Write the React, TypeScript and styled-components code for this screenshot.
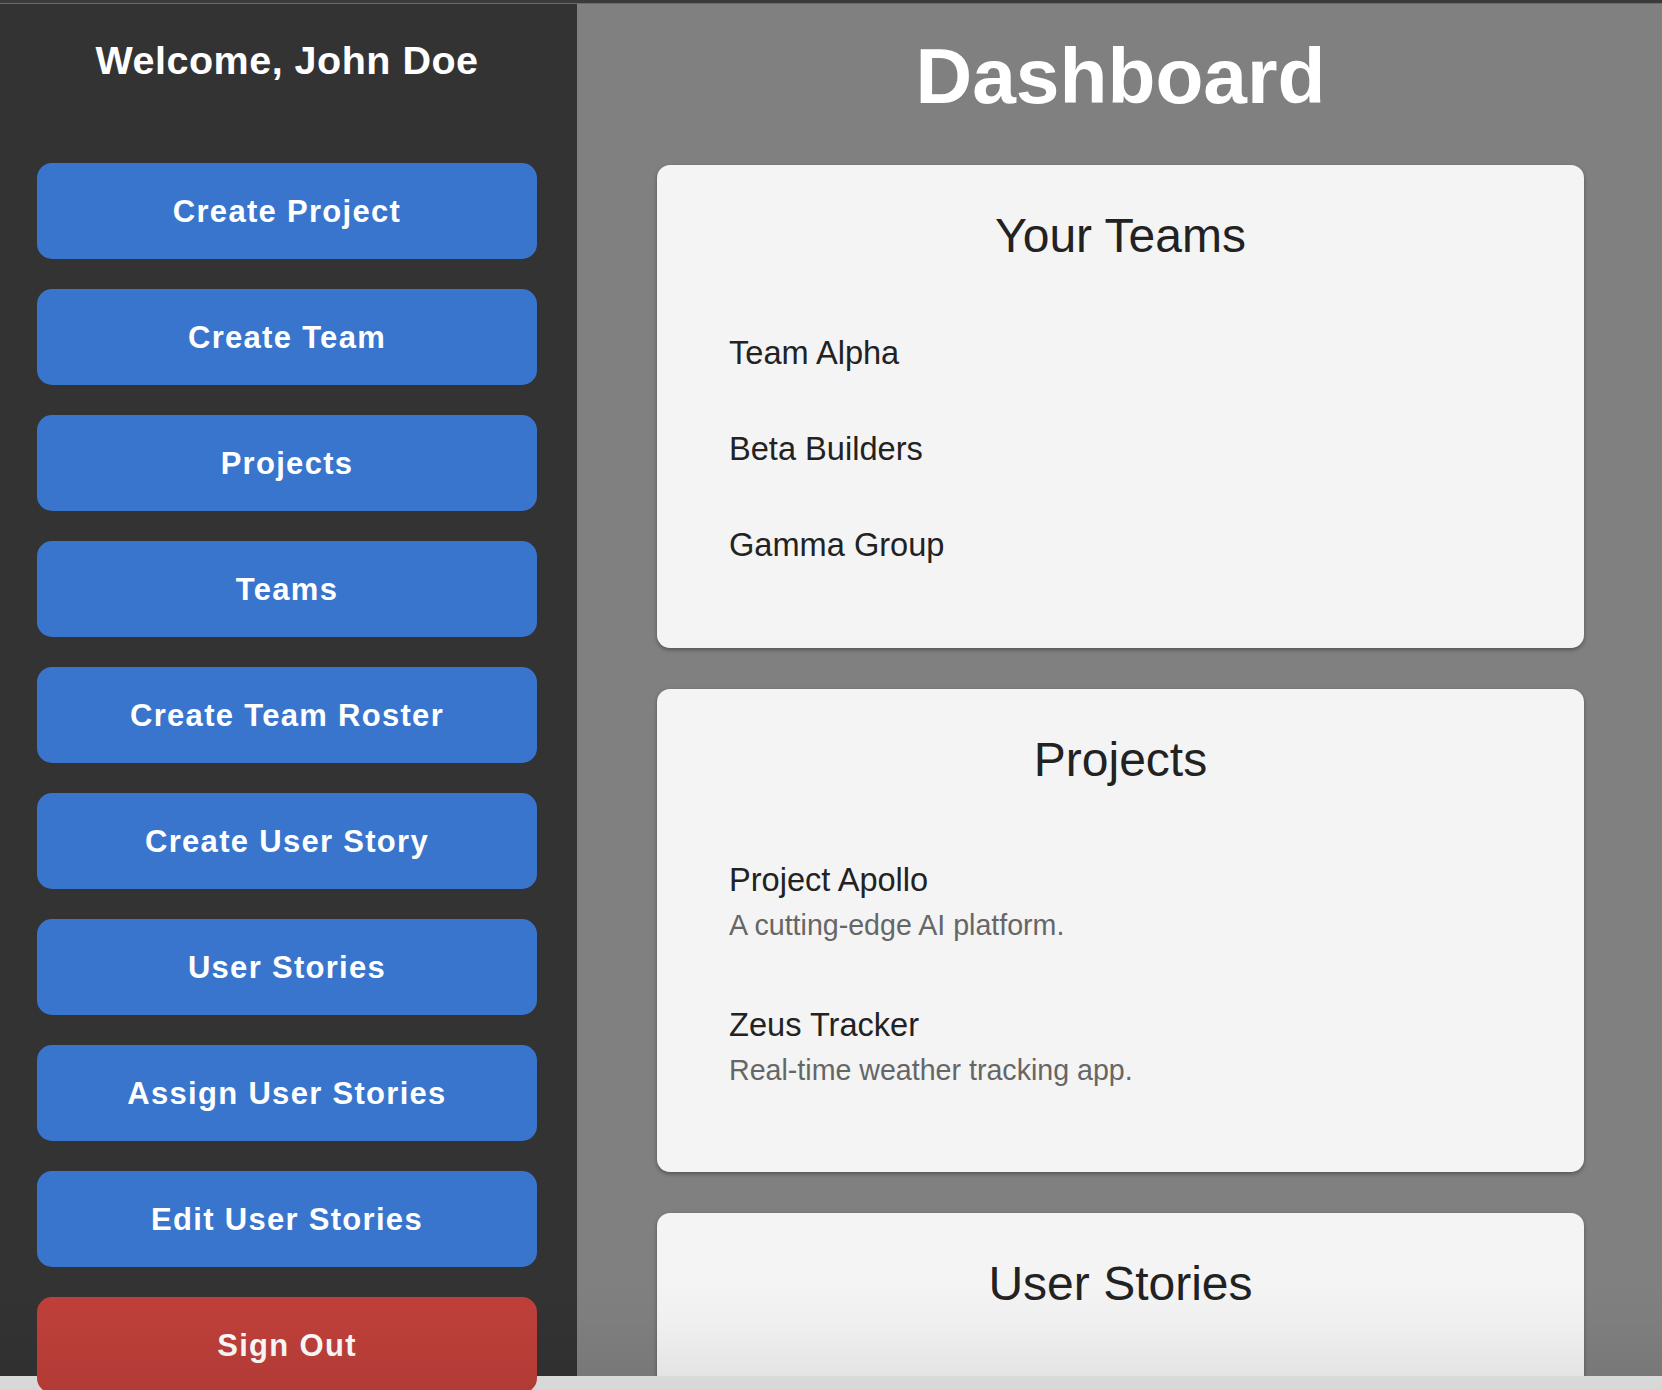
import React from "react";
import styled, { createGlobalStyle } from "styled-components";

const GlobalStyle = createGlobalStyle`
  html, body {
    margin: 0;
    padding: 0;
    overflow: hidden;
    background: #e9e9e9;
    font-family: "Liberation Sans", Arial, Helvetica, sans-serif;
  }
  * { box-sizing: border-box; }
`;

const Page = styled.div`
  height: 1390px;
  display: flex;
  flex-direction: column;
  position: relative;
`;

const TopStrip = styled.div`
  height: 4px;
  flex: none;
  background: #3b3b3b;
  border-bottom: 1px solid #6a6a6a;
`;

const Layout = styled.div`
  height: 1372px;
  display: flex;
  flex: none;
`;

const Sidebar = styled.nav`
  width: 577px;
  flex: none;
  background: #333333;
  padding: 34px 40px 0 37px;
  display: flex;
  flex-direction: column;
  gap: 30px;
`;

const Welcome = styled.h2`
  margin: 0 0 50px;
  color: #ffffff;
  font-size: 39.5px;
  line-height: 45px;
  font-weight: 700;
  text-align: center;
  letter-spacing: 0.5px;
`;

const NavButton = styled.button<{ $danger?: boolean }>`
  flex: none;
  height: 96px;
  width: 100%;
  border: none;
  border-radius: 15px;
  padding: 2px 0 0;
  background: ${(p) => (p.$danger ? "#c0403a" : "#3975cc")};
  color: #ffffff;
  font-family: "Liberation Sans", Arial, Helvetica, sans-serif;
  font-size: 31px;
  font-weight: 700;
  letter-spacing: 1.3px;
  cursor: pointer;
`;

const Main = styled.main`
  flex: 1;
  background: #808080;
  overflow: hidden;
  padding: 27px 78px 0 80px;
  display: flex;
  flex-direction: column;
  gap: 41px;
`;

const PageTitle = styled.h1`
  margin: 0 0 3px;
  color: #ffffff;
  font-size: 78.5px;
  line-height: 90px;
  font-weight: 700;
  text-align: center;
`;

const Card = styled.section`
  flex: none;
  height: 483px;
  background: #f4f4f4;
  border-radius: 13px;
  box-shadow: 0 2px 4px rgba(0, 0, 0, 0.35);
  padding: 43px 72px 0 72px;
`;

const CardTitle = styled.h3`
  margin: 0;
  color: #222222;
  font-size: 48px;
  line-height: 55px;
  font-weight: 400;
  text-align: center;
`;

const List = styled.ul`
  list-style: none;
  margin: 41.5px 0 0;
  padding: 0;
`;

const Item = styled.li<{ $pad: number }>`
  padding: ${(p) => p.$pad}px 0;
`;

const ItemName = styled.div`
  color: #222222;
  font-size: 32.6px;
  line-height: 37px;
`;

const ItemDesc = styled.div`
  margin-top: 11px;
  color: #666666;
  font-size: 28.6px;
  line-height: 32px;
`;

const BottomShade = styled.div`
  position: absolute;
  left: 0;
  right: 0;
  bottom: 0;
  height: 110px;
  pointer-events: none;
  background: linear-gradient(
    to bottom,
    rgba(0, 0, 0, 0) 0%,
    rgba(0, 0, 0, 0.02) 40%,
    rgba(0, 0, 0, 0.08) 100%
  );
`;

const navItems = [
  "Create Project",
  "Create Team",
  "Projects",
  "Teams",
  "Create Team Roster",
  "Create User Story",
  "User Stories",
  "Assign User Stories",
  "Edit User Stories",
];

const teams = ["Team Alpha", "Beta Builders", "Gamma Group"];

const projects = [
  { name: "Project Apollo", desc: "A cutting-edge AI platform." },
  { name: "Zeus Tracker", desc: "Real-time weather tracking app." },
];

export default function App() {
  return (
    <>
      <GlobalStyle />
      <Page>
        <TopStrip />
        <Layout>
          <Sidebar>
            <Welcome>Welcome, John Doe</Welcome>
            {navItems.map((label) => (
              <NavButton key={label}>{label}</NavButton>
            ))}
            <NavButton $danger>Sign Out</NavButton>
          </Sidebar>
          <Main>
            <PageTitle>Dashboard</PageTitle>
            <Card>
              <CardTitle>Your Teams</CardTitle>
              <List>
                {teams.map((t) => (
                  <Item key={t} $pad={29.5}>
                    <ItemName>{t}</ItemName>
                  </Item>
                ))}
              </List>
            </Card>
            <Card>
              <CardTitle>Projects</CardTitle>
              <List>
                {projects.map((p) => (
                  <Item key={p.name} $pad={32.5}>
                    <ItemName>{p.name}</ItemName>
                    <ItemDesc>{p.desc}</ItemDesc>
                  </Item>
                ))}
              </List>
            </Card>
            <Card>
              <CardTitle>User Stories</CardTitle>
            </Card>
          </Main>
        </Layout>
        <BottomShade />
      </Page>
    </>
  );
}
